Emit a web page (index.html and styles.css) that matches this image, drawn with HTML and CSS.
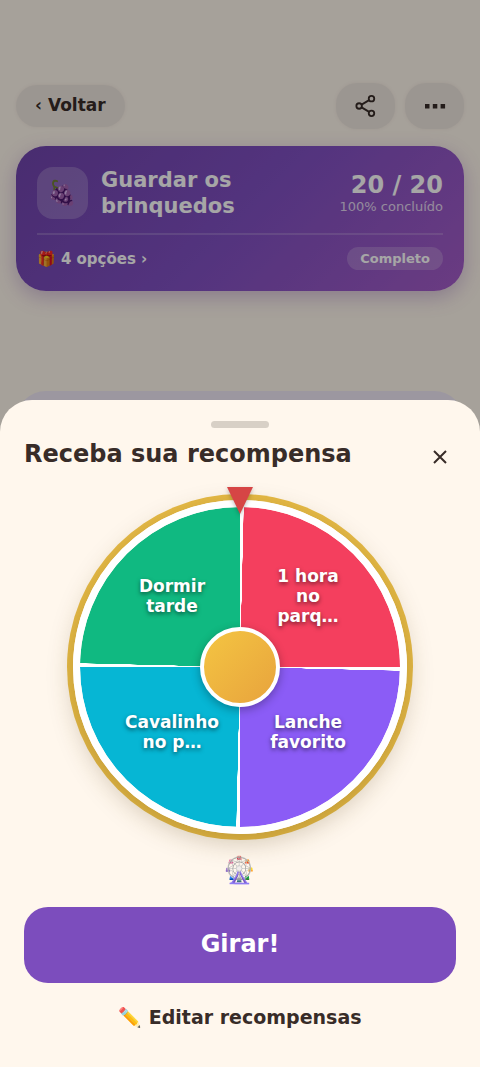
FILE: index.html
```html
<!DOCTYPE html>
<html lang="pt-BR">
<head>
<meta charset="utf-8">
<meta name="viewport" content="width=device-width, initial-scale=1">
<title>Receba sua recompensa</title>
<link rel="stylesheet" href="styles.css">
</head>
<body>
<div class="page">
  <header class="topbar">
    <button class="pill back" type="button"><span class="chevron">‹</span> Voltar</button>
    <div class="actions">
      <button class="pill action" type="button" aria-label="Compartilhar">
        <svg class="share" viewBox="0 0 24 24" aria-hidden="true"><circle cx="18" cy="4" r="3"/><circle cx="4.5" cy="12" r="3"/><circle cx="18" cy="20" r="3"/><path d="M7.2 10.5 15.4 5.6M7.2 13.5l8.2 4.9"/></svg>
      </button>
      <button class="pill action" type="button" aria-label="Mais opções">
        <svg class="dots" viewBox="0 0 22 6" aria-hidden="true"><path d="M1 1h4.5v4.5H1zM8.8 1h4.5v4.5H8.800zM16.600 1h4.500v4.500h-4.500z"/></svg>
      </button>
    </div>
  </header>
  <section class="card">
    <div class="card-main">
      <div class="badge">🍇</div>
      <h2 class="card-title">Guardar os brinquedos</h2>
      <div class="score">
        <div class="count">20 / 20</div>
        <div class="percent">100% concluído</div>
      </div>
    </div>
    <div class="card-foot">
      <button class="options" type="button">🎁 4 opções ›</button>
      <span class="status">Completo</span>
    </div>
  </section>
  <section class="next-card"></section>
</div>
<div class="scrim"></div>
<section class="sheet" role="dialog" aria-labelledby="sheet-title">
  <div class="handle"></div>
  <div class="sheet-head">
    <h1 class="sheet-title" id="sheet-title">Receba sua recompensa</h1>
    <button class="close" type="button" aria-label="Fechar">
      <svg viewBox="0 0 14 14" aria-hidden="true"><path d="M1 1l12 12M13 1 1 13"/></svg>
    </button>
  </div>
  <div class="wheel">
    <div class="slice">Dormir<br>tarde</div>
    <div class="slice">1 hora<br>no<br>parq…</div>
    <div class="slice lower">Cavalinho<br>no p…</div>
    <div class="slice lower">Lanche<br>favorito</div>
    <div class="hub"></div>
    <svg class="pointer" viewBox="0 0 26 27" aria-hidden="true"><path d="M0 0h26L13 27z"/></svg>
  </div>
  <div class="ferris">🎡</div>
  <button class="spin" type="button">Girar!</button>
  <button class="edit" type="button">✏️ Editar recompensas</button>
</section>
</body>
</html>
```

FILE: styles.css
```css
* { box-sizing: border-box; }
body {
  margin: 0;
  min-height: 100vh;
  background: #fff7ed;
  color: #382c28;
  font-family: "DejaVu Sans", "Noto Color Emoji", sans-serif;
}
button {
  border: 0;
  margin: 0;
  padding: 0;
  background: none;
  color: inherit;
  font: inherit;
  font-weight: 700;
}
.page { padding: 83px 16px 0; }
.topbar {
  display: flex;
  align-items: center;
  justify-content: space-between;
  height: 46px;
}
.actions { display: flex; gap: 10px; }
.pill {
  background: #efe7df;
  border-radius: 21px;
  box-shadow: 0 0 4px rgba(60, 40, 20, .06);
}
.back { height: 42px; padding: 0 19px 2px; font-size: 17px; }
.chevron { font-size: 17px; }
.action {
  display: flex;
  align-items: center;
  justify-content: center;
  width: 59px;
  height: 46px;
}
.share { width: 22px; height: 24px; fill: none; stroke: currentColor; stroke-width: 2; }
.dots { width: 22px; height: 6px; fill: currentColor; }
.card {
  margin-top: 17px;
  padding: 21px 21px 21px;
  border-radius: 30px;
  background: linear-gradient(135deg, #7044ac 0%, #8050c2 50%, #a45cc8 100%);
  box-shadow: 0 6px 20px rgba(110, 60, 160, .3);
  color: #fff;
}
.card-main { display: flex; align-items: center; gap: 13px; padding-bottom: 14px; }
.badge {
  display: grid;
  place-items: center;
  width: 51px;
  height: 52px;
  border-radius: 16px;
  background: rgba(255, 255, 255, .2);
  font-size: 24px;
}
.card-title { flex: 1; margin: 0; font-size: 21px; line-height: 26px; }
.score { text-align: right; }
.count { font-size: 24px; line-height: 28px; font-weight: 700; }
.percent { font-size: 13px; line-height: 16px; opacity: .75; }
.card-foot {
  display: flex;
  align-items: center;
  justify-content: space-between;
  padding-top: 12px;
  border-top: 2px solid rgba(255, 255, 255, .18);
}
.options { font-size: 15px; line-height: 22px; }
.status {
  padding: 0 13px;
  border-radius: 12px;
  background: rgba(255, 255, 255, .2);
  font-size: 13px;
  line-height: 23px;
  font-weight: 700;
}
.next-card {
  height: 140px;
  margin-top: 100px;
  border-radius: 30px;
  background: #f0e9f6;
}
.scrim { position: fixed; inset: 0; background: rgba(0, 0, 0, .35); }
.sheet {
  position: fixed;
  inset: auto 0 0;
  display: flex;
  flex-direction: column;
  align-items: stretch;
  padding: 21px 24px 35px;
  border-radius: 32px 32px 0 0;
  background: #fff7ed;
}
.handle { align-self: center; width: 58px; height: 7px; border-radius: 4px; background: #d8d0c6; }
.sheet-head {
  display: flex;
  align-items: flex-start;
  justify-content: space-between;
  margin-top: 11px;
}
.sheet-title { margin: 0; font-size: 24px; line-height: 30px; }
.close { display: grid; place-items: center; width: 32px; height: 32px; padding-top: 4px; }
.close svg { width: 14px; height: 14px; fill: none; stroke: currentColor; stroke-width: 2; }
.wheel {
  position: relative;
  display: grid;
  grid-template-columns: 1fr 1fr;
  grid-template-rows: 1fr 1fr;
  align-self: center;
  width: 334px;
  height: 334px;
  margin-top: 29px;
  border: 7px solid #fff;
  border-radius: 50%;
  background: conic-gradient(#fff 0 1.3deg, #f43f5e 1.4deg 90deg, #fff 90.1deg 91.3deg, #8b5cf6 91.4deg 180deg, #fff 180.1deg 181.3deg, #06b6d4 181.4deg 270deg, #fff 270.1deg 271.3deg, #10b981 271.4deg 359.9deg, #fff) padding-box;
  box-shadow: 0 8px 26px rgba(90, 70, 20, .28), 0 0 0 6px #e6ba45;
}
.slice {
  display: flex;
  align-items: center;
  justify-content: center;
  padding: 18px 0 0 24px;
  color: #fff;
  font-size: 17px;
  line-height: 20px;
  font-weight: 700;
  text-align: center;
  text-shadow: 0 2px 4px rgba(0, 0, 0, .5);
}
.slice:nth-child(even) { padding: 18px 24px 0 0; }
.slice.lower { padding-top: 0; padding-bottom: 30px; }
.hub {
  position: absolute;
  inset: 0;
  margin: auto;
  width: 80px;
  height: 80px;
  border: 4px solid #fff;
  border-radius: 50%;
  background: linear-gradient(135deg, #f4c542, #e8a33d);
  box-shadow: 0 3px 10px rgba(0, 0, 0, .3);
}
.pointer {
  position: absolute;
  top: -20px;
  left: 50%;
  width: 26px;
  height: 27px;
  margin-left: -13px;
  fill: #d64545;
  filter: drop-shadow(0 2px 2px rgba(0, 0, 0, .25));
}
.ferris { margin-top: 20px; font-size: 26px; line-height: 32px; text-align: center; }
.spin {
  height: 76px;
  margin-top: 21px;
  padding-bottom: 2px;
  border-radius: 24px;
  background: #7c4dbd;
  color: #fff;
  font-size: 24px;
}
.edit { align-self: center; margin-top: 19px; font-size: 19px; line-height: 30px; }
```
